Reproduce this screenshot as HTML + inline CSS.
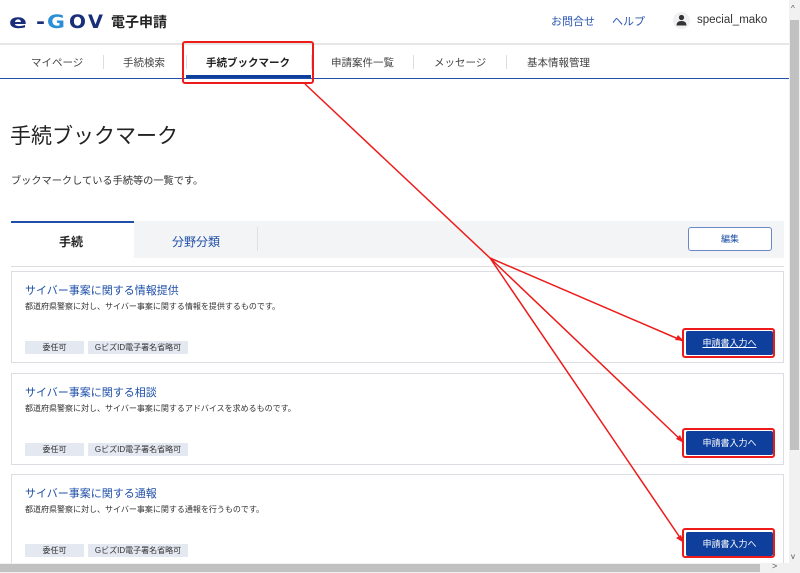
<!DOCTYPE html>
<html><head><meta charset="utf-8"><style>
*{margin:0;padding:0;box-sizing:border-box}
body{width:800px;height:573px;overflow:hidden;background:#fff;font-family:"Liberation Sans","Noto Sans CJK JP",sans-serif;color:#333;position:relative}
.a{position:absolute;white-space:nowrap}
.nav{font-size:10.5px;color:#444;top:55px}
.sep{position:absolute;top:55px;width:1px;height:14px;background:#ddd}
.card{position:absolute;left:11px;width:773px;height:92px;border:1px solid #dcdde2;background:#fff}
.ct{position:absolute;left:13px;top:10px;font-size:11px;color:#1f4fa8}
.cd{position:absolute;left:13px;top:29px;font-size:8px;color:#333}
.tag{position:absolute;top:69px;height:13px;background:#e3e8f1;font-size:8px;color:#333;text-align:center;line-height:13px}
.btn{position:absolute;left:674px;width:87px;height:24px;background:#0e3f9c;color:#fff;font-size:9px;text-align:center;line-height:24px;border-radius:2px}
.red{position:absolute;border:2px solid #ee1b1b;border-radius:3px}
</style></head><body>
<!-- header -->
<svg class="a" style="left:0;top:0" width="110" height="40">
<g font-family="DejaVu Sans,sans-serif" font-weight="bold" font-size="19" fill="#1a2f7a">
<text x="9" y="28" textLength="18" lengthAdjust="spacingAndGlyphs">e</text>
<text x="36" y="28" textLength="9" lengthAdjust="spacingAndGlyphs">-</text>
<text x="47" y="28" textLength="18" lengthAdjust="spacingAndGlyphs" fill="#2a8fd6">G</text>
<text x="69" y="28" textLength="17" lengthAdjust="spacingAndGlyphs">O</text>
<text x="88" y="28" textLength="15" lengthAdjust="spacingAndGlyphs">V</text>
</g></svg>
<div class="a" style="left:111px;top:12px;font-size:14px;font-weight:bold;color:#222">電子申請</div>
<div class="a" style="left:551px;top:13px;font-size:11px;color:#2a55b0">お問合せ</div>
<div class="a" style="left:612px;top:13px;font-size:11px;color:#2a55b0">ヘルプ</div>
<div class="a" style="left:673px;top:12px;width:17px;height:17px;border-radius:50%;background:#f0f0f2"></div>
<svg class="a" style="left:676px;top:14px" width="11" height="12" viewBox="0 0 11 12"><circle cx="5.5" cy="3.5" r="2.6" fill="#333"/><path d="M0.5 11.5 Q0.5 7 5.5 7 Q10.5 7 10.5 11.5Z" fill="#333"/></svg>
<div class="a" style="left:697px;top:14px;font-size:11.5px;color:#333">special_mako</div>
<div class="a" style="left:0;top:43px;width:789px;height:2px;background:#e6e6e6"></div>
<!-- nav -->
<div class="a nav" style="left:31px">マイページ</div>
<div class="sep" style="left:103px"></div>
<div class="a nav" style="left:123px">手続検索</div>
<div class="sep" style="left:186px"></div>
<div class="a nav" style="left:206px;font-weight:bold;color:#222">手続ブックマーク</div>
<div class="sep" style="left:311px"></div>
<div class="a nav" style="left:331px">申請案件一覧</div>
<div class="sep" style="left:413px"></div>
<div class="a nav" style="left:434px">メッセージ</div>
<div class="sep" style="left:506px"></div>
<div class="a nav" style="left:527px">基本情報管理</div>
<div class="a" style="left:186px;top:75px;width:125px;height:4px;background:#0e3f9c"></div>
<div class="a" style="left:0;top:78px;width:789px;height:1px;background:#1f4fa8"></div>
<div class="red" style="left:182px;top:41px;width:132px;height:43px"></div>
<!-- title -->
<div class="a" style="left:10px;top:120px;font-size:21px;color:#222">手続ブックマーク</div>
<div class="a" style="left:11px;top:172px;font-size:10.2px;color:#333">ブックマークしている手続等の一覧です。</div>
<!-- tabs -->
<div class="a" style="left:11px;top:221px;width:773px;height:37px;background:#f3f4f6"></div>
<div class="a" style="left:11px;top:221px;width:123px;height:37px;background:#fff;border-top:2px solid #1f4fa8"></div>
<div class="a" style="left:59px;top:233px;font-size:12px;font-weight:bold;color:#222">手続</div>
<div class="a" style="left:172px;top:233px;font-size:12px;color:#1f4fa8">分野分類</div>
<div class="a" style="left:257px;top:227px;width:1px;height:24px;background:#e0e0e0"></div>
<div class="a" style="left:688px;top:227px;width:84px;height:24px;border:1px solid #6a87c6;border-radius:3px;background:#fff;font-size:9px;color:#1f4fa8;text-align:center;line-height:22px">編集</div>
<div class="a" style="left:11px;top:266px;width:773px;height:1px;background:#ddd"></div>
<!-- cards -->
<div class="card" style="top:271px"><div class="ct">サイバー事案に関する情報提供</div><div class="cd">都道府県警察に対し、サイバー事案に関する情報を提供するものです。</div><div class="tag" style="left:13px;width:59px">委任可</div><div class="tag" style="left:76px;width:100px">GビズID電子署名省略可</div><div class="btn" style="top:59px;text-decoration:underline">申請書入力へ</div></div>
<div class="card" style="top:373px"><div class="ct">サイバー事案に関する相談</div><div class="cd">都道府県警察に対し、サイバー事案に関するアドバイスを求めるものです。</div><div class="tag" style="left:13px;width:59px">委任可</div><div class="tag" style="left:76px;width:100px">GビズID電子署名省略可</div><div class="btn" style="top:57px">申請書入力へ</div></div>
<div class="card" style="top:474px;height:92px"><div class="ct">サイバー事案に関する通報</div><div class="cd">都道府県警察に対し、サイバー事案に関する通報を行うものです。</div><div class="tag" style="left:13px;width:59px">委任可</div><div class="tag" style="left:76px;width:100px">GビズID電子署名省略可</div><div class="btn" style="top:57px">申請書入力へ</div></div>
<div class="red" style="left:682px;top:328px;width:93px;height:30px"></div>
<div class="red" style="left:682px;top:428px;width:93px;height:30px"></div>
<div class="red" style="left:682px;top:528px;width:93px;height:30px"></div>
<svg class="a" style="left:0;top:0" width="800" height="573">
<g stroke="#ee1b1b" stroke-width="1.5" fill="none"><path d="M305 84 L490 258 L683 341 M490 258 L683 442 M490 258 L683 542"/></g>
<g fill="#ee1b1b"><path d="M684 341 l-9 -1 l3 -5z"/><path d="M684 443 l-8 -4 l4 -4z"/><path d="M684 543 l-8 -5 l5 -3z"/></g>
</svg>
<!-- scrollbars -->
<div class="a" style="left:789px;top:0;width:11px;height:573px;background:#f1f1f1"></div>
<div class="a" style="left:790px;top:20px;width:9px;height:430px;background:#c1c1c1"></div>
<div class="a" style="left:791px;top:4px;font-size:8px;color:#555">^</div>
<div class="a" style="left:791px;top:552px;font-size:8px;color:#555">v</div>
<div class="a" style="left:0;top:563px;width:789px;height:10px;background:#f1f1f1"></div>
<div class="a" style="left:0;top:564px;width:760px;height:8px;background:#c1c1c1"></div>
<div class="a" style="left:772px;top:561px;font-size:9px;color:#555">&gt;</div>
</body></html>
